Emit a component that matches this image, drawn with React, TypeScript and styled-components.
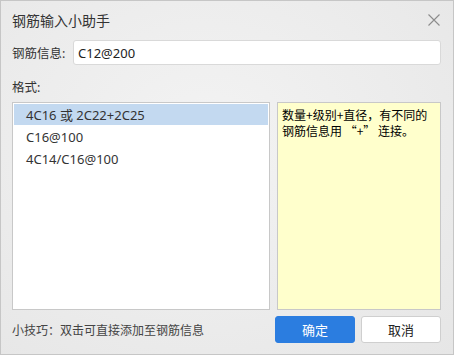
import React from 'react';
import styled, { createGlobalStyle } from 'styled-components';

const GlobalStyle = createGlobalStyle`
  html, body {
    margin: 0;
    padding: 0;
    background: #ffffff;
  }
  * {
    box-sizing: border-box;
  }
`;

const font = `'Noto Sans', 'Noto Sans CJK SC', sans-serif`;

const Dialog = styled.div`
  width: 454px;
  height: 355px;
  border: 1px solid #c6c6c6;
  background: radial-gradient(ellipse at 45% 40%, #f3f3f3 0%, #ececec 55%, #e6e6e6 100%);
  padding: 0 12px 0 11px;
  display: flex;
  flex-direction: column;
  font-family: ${font};
  color: #333;
`;

const TitleBar = styled.div`
  height: 38px;
  display: flex;
  align-items: center;
  justify-content: space-between;
`;

const Title = styled.div`
  font-size: 14px;
  color: #333;
`;

const CloseButton = styled.button`
  border: none;
  background: none;
  padding: 0;
  width: 12px;
  height: 12px;
  margin-right: 1px;
  display: flex;
  align-items: center;
  justify-content: center;
  cursor: pointer;
`;

const FieldRow = styled.div`
  margin-top: 1px;
  height: 25px;
  display: flex;
  align-items: center;
`;

const Label = styled.label`
  width: 61px;
  font-size: 12.5px;
  color: #333;
`;

const TextInput = styled.input`
  flex: 1;
  height: 25px;
  border: 1px solid #d9d9d9;
  border-radius: 3px;
  background: #fff;
  padding: 0 4px;
  font-family: ${font};
  font-size: 13px;
  color: #222;
  outline: none;
`;

const SectionLabel = styled.div`
  margin-top: 13px;
  height: 20px;
  line-height: 20px;
  font-size: 12.5px;
  color: #333;
`;

const Content = styled.div`
  margin-top: 4px;
  height: 208px;
  display: grid;
  grid-template-columns: 258px 1fr;
  gap: 7px;
`;

const List = styled.div`
  background: #fff;
  border: 1px solid #c8c8c8;
  padding: 1px 1px;
`;

const ListRow = styled.div<{ $selected?: boolean }>`
  height: 21px;
  margin-bottom: 1px;
  padding-left: 12px;
  display: flex;
  align-items: center;
  font-size: 13px;
  color: #333;
  background: ${(p) => (p.$selected ? '#c3d9f0' : 'transparent')};
  cursor: default;
`;

const Hint = styled.div`
  background: #ffffcc;
  border: 1px solid #c8c8c8;
  padding: 4px 4px;
  font-family: 'Noto Sans CJK SC', sans-serif;
  font-size: 12px;
  line-height: 16px;
  color: #000;
  white-space: pre;
`;

const Footer = styled.div`
  margin-top: 6px;
  height: 27px;
  display: flex;
  align-items: center;
`;

const Tip = styled.div`
  flex: 1;
  font-size: 12px;
  color: #444;
`;

const Button = styled.button<{ $primary?: boolean }>`
  width: 80px;
  height: 27px;
  border-radius: 3px;
  border: 1px solid ${(p) => (p.$primary ? '#2b7de0' : '#cfcfcf')};
  background: ${(p) => (p.$primary ? '#2b7de0' : '#ffffff')};
  color: ${(p) => (p.$primary ? '#ffffff' : '#222')};
  font-family: ${font};
  font-size: 13px;
  padding: 0;
  cursor: pointer;

  & + & {
    margin-left: 6px;
  }
`;

const formats = ['4C16 或 2C22+2C25', 'C16@100', '4C14/C16@100'];

export default function App() {
  const [value, setValue] = React.useState('C12@200');
  const [selected, setSelected] = React.useState(0);

  return (
    <>
      <GlobalStyle />
      <Dialog>
        <TitleBar>
          <Title>钢筋输入小助手</Title>
          <CloseButton aria-label="关闭">
            <svg width="12" height="12" viewBox="0 0 12 12">
              <path d="M0.5 0.5 L11.5 11.5 M11.5 0.5 L0.5 11.5" stroke="#8c8c8c" strokeWidth="1.1" fill="none" />
            </svg>
          </CloseButton>
        </TitleBar>
        <FieldRow>
          <Label>钢筋信息:</Label>
          <TextInput value={value} onChange={(e) => setValue(e.target.value)} />
        </FieldRow>
        <SectionLabel>格式:</SectionLabel>
        <Content>
          <List>
            {formats.map((f, i) => (
              <ListRow key={f} $selected={i === selected} onClick={() => setSelected(i)}>
                {f}
              </ListRow>
            ))}
          </List>
          <Hint>{'数量+级别+直径，有不同的\n钢筋信息用 “+” 连接。'}</Hint>
        </Content>
        <Footer>
          <Tip>小技巧：双击可直接添加至钢筋信息</Tip>
          <Button $primary>确定</Button>
          <Button>取消</Button>
        </Footer>
      </Dialog>
    </>
  );
}
